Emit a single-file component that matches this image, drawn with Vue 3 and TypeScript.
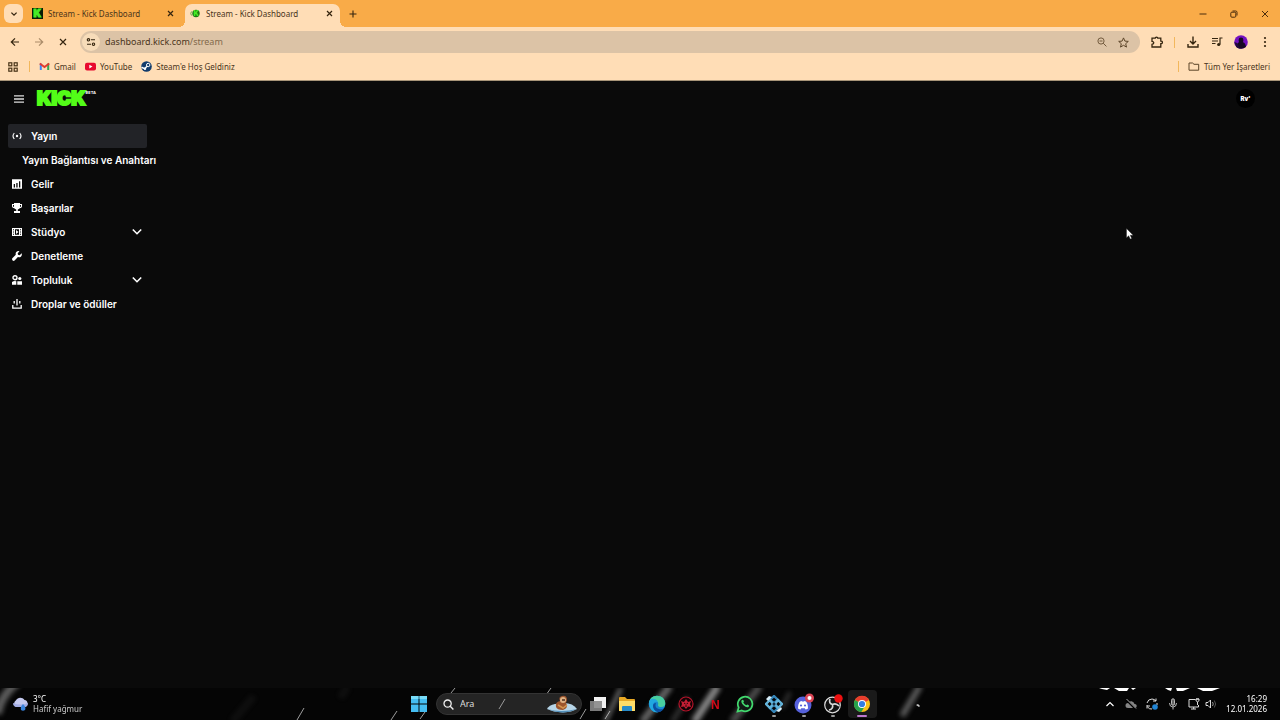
<script setup lang="ts">
import { ref } from 'vue'

interface NavItem {
  label: string
  icon: string
  active?: boolean
  child?: boolean
  expandable?: boolean
}

const search = ref('')
const address = ref('dashboard.kick.com/stream')

const nav: NavItem[] = [
  { label: 'Yayın', icon: 'live', active: true },
  { label: 'Yayın Bağlantısı ve Anahtarı', icon: '', child: true },
  { label: 'Gelir', icon: 'chart' },
  { label: 'Başarılar', icon: 'trophy' },
  { label: 'Stüdyo', icon: 'studio', expandable: true },
  { label: 'Denetleme', icon: 'wrench' },
  { label: 'Topluluk', icon: 'people', expandable: true },
  { label: 'Droplar ve ödüller', icon: 'drops' },
]
</script>

<template>
  <div class="screen">
    <header class="browser">
      <div class="tabstrip">
        <button class="tab-search" aria-label="Sekmelerde ara">
          <svg width="8" height="8" viewBox="0 0 8 8"><path d="M1.400 2.600 4 5.200l2.600-2.600" fill="none" stroke="#35250f" stroke-width="1.300" /></svg>
        </button>
        <div class="tab">
          <svg class="favicon" width="11" height="11" viewBox="0 0 11 11">
            <rect width="11" height="11" fill="#071d05" />
            <text x="1.4" y="9.2" class="k-mark" font-size="10">K</text>
          </svg>
          <span class="tab-title">Stream - Kick Dashboard</span>
          <button class="close" aria-label="Sekmeyi kapat">
            <svg width="7" height="7" viewBox="0 0 7 7"><path d="m1 1 5 5M6 1 1 6" stroke="#35250f" stroke-width="1.2" /></svg>
          </button>
        </div>
        <div class="tab active">
          <svg class="favicon" width="11" height="11" viewBox="0 0 11 11">
            <circle cx="6" cy="5.5" r="3.700" fill="#1c7a12" />
            <path d="M1.5 3.5Q0 5.5 1.5 7.5" stroke="#6aa648" fill="none" />
            <text x="3.400" y="8" class="k-mark small" font-size="7">K</text>
          </svg>
          <span class="tab-title">Stream - Kick Dashboard</span>
          <button class="close" aria-label="Sekmeyi kapat">
            <svg width="7" height="7" viewBox="0 0 7 7"><path d="m1 1 5 5M6 1 1 6" stroke="#35250f" stroke-width="1.2" /></svg>
          </button>
        </div>
        <button class="new-tab" aria-label="Yeni sekme">
          <svg width="8" height="8" viewBox="0 0 8 8"><path d="M4 .5v7M.5 4h7" stroke="#35250f" stroke-width="1.1" /></svg>
        </button>
        <div class="window-controls">
          <button aria-label="Küçült"><svg width="8" height="8" viewBox="0 0 8 8"><path d="M.5 4h7" stroke="#4a2c0c" /></svg></button>
          <button aria-label="Geri yükle">
            <svg width="8" height="8" viewBox="0 0 8 8" fill="none" stroke="#4a2c0c"><rect x=".8" y="2.2" width="5" height="5" rx="1" /><path d="M2.5 1h3.2Q7 1 7 2.3v3.2" /></svg>
          </button>
          <button aria-label="Kapat"><svg width="8" height="8" viewBox="0 0 8 8"><path d="m1 1 6 6M7 1 1 7" stroke="#4a2c0c" /></svg></button>
        </div>
      </div>

      <div class="toolbar">
        <button class="tool" aria-label="Geri">
          <svg width="10" height="10" viewBox="0 0 10 10"><path d="M9 5H1.5M5 1.3 1.3 5 5 8.7" fill="none" stroke="#35250f" stroke-width="1.2" /></svg>
        </button>
        <button class="tool" aria-label="İleri">
          <svg width="10" height="10" viewBox="0 0 10 10"><path d="M1 5h7.5M5 1.3 8.7 5 5 8.7" fill="none" stroke="#ab8c69" stroke-width="1.2" /></svg>
        </button>
        <button class="tool" aria-label="Yüklemeyi durdur">
          <svg width="10" height="10" viewBox="0 0 10 10"><path d="m2 2 6 6M8 2 2 8" stroke="#35250f" stroke-width="1.2" /></svg>
        </button>
        <div class="omnibox">
          <button class="site-info" aria-label="Site bilgileri">
            <svg width="10" height="10" viewBox="0 0 10 10" fill="none" stroke="#35250f" stroke-width="1.1"><circle cx="2.5" cy="2.8" r="1.2" /><path d="M5 2.8h4M1 7.2h4" /><circle cx="7.5" cy="7.2" r="1.2" /></svg>
          </button>
          <label class="url">
            <span aria-hidden="true">dashboard.kick.com<i>/stream</i></span>
            <input v-model="address" type="text" aria-label="Adres çubuğu" />
          </label>
          <button class="omni-btn" aria-label="Yakınlaştırma">
            <svg width="10" height="10" viewBox="0 0 10 10" fill="none" stroke="#725a3d"><circle cx="4" cy="4" r="3.1" /><path d="m6.2 6.2 3.2 3.2M2.5 4h3" /></svg>
          </button>
          <button class="omni-btn" aria-label="Yer işareti ekle">
            <svg width="11" height="11" viewBox="0 0 11 11"><path d="m5.5.9 1.4 3.2 3.4.3-2.6 2.3.8 3.4-3-1.8-3 1.8.8-3.4L.7 4.4l3.4-.3z" fill="none" stroke="#5c4529" /></svg>
          </button>
        </div>
        <div class="toolbar-actions">
          <button aria-label="Uzantılar">
            <svg width="12" height="12" viewBox="0 0 12 12"><path d="M1 2.200h3.200a1.300 1 0 0 1 2.600 0h3v3h.4a1.2 1.2 0 0 1 0 2.4h-.4V11H1V8.3q1.800-.2 1.800-1.500T1 5.300z" fill="none" stroke="#35250f" stroke-width="1.300" /></svg>
          </button>
          <span class="divider"></span>
          <button aria-label="İndirilenler">
            <svg width="12" height="12" viewBox="0 0 12 12"><path d="M6 .5V8M3 5l3 3 3-3M1 8v3h10V8" fill="none" stroke="#35250f" stroke-width="1.4" /></svg>
          </button>
          <button aria-label="Medya denetimi">
            <svg width="12" height="12" viewBox="0 0 12 12"><path d="M1 2.5h6M1 5h6M1 7.5h3.5M9 8.5V2h2.5" fill="none" stroke="#35250f" stroke-width="1.2" /><circle cx="7.7" cy="8.5" r="1.6" fill="#35250f" /></svg>
          </button>
          <button aria-label="Profil">
            <svg width="14" height="14" viewBox="0 0 14 14"><circle cx="7" cy="7" r="6.8" fill="#7410c0" /><path d="M2 12Q3 8 5 7.3 3.7 2.5 7 2.5T9 7.3Q11.5 8 12 12 7 15.5 2 12z" fill="#160824" /><path d="M.4 7Q1 12 6 13.7L3 8z" fill="#240a3d" /></svg>
          </button>
          <button aria-label="Menü">
            <svg width="12" height="12" viewBox="0 0 12 12" fill="#35250f"><circle cx="6" cy="2" r="1.1" /><circle cx="6" cy="6" r="1.1" /><circle cx="6" cy="10" r="1.1" /></svg>
          </button>
        </div>
      </div>

      <nav class="bookmarks" aria-label="Yer işaretleri">
        <button class="apps" aria-label="Uygulamalar">
          <svg width="10" height="10" viewBox="0 0 10 10" fill="none" stroke="#4a3518" stroke-width="1.2"><rect x=".8" y=".8" width="3" height="3" /><rect x="6.2" y=".8" width="3" height="3" /><rect x=".8" y="6.2" width="3" height="3" /><rect x="6.2" y="6.2" width="3" height="3" /></svg>
        </button>
        <span class="divider"></span>
        <a href="#gmail">
          <svg width="11" height="11" viewBox="0 0 11 11"><path d="M.8 2.5h2V9h-2z" fill="#4285f4" /><path d="M8.2 2.5h2V9h-2z" fill="#34a853" /><path d="M.8 2.5 5.5 6l4.7-3.5" fill="none" stroke="#e13b2e" stroke-width="1.9" /></svg>
          Gmail
        </a>
        <a href="#youtube">
          <svg width="11" height="11" viewBox="0 0 11 11"><rect y="1.7" width="11" height="7.8" rx="2" fill="#e8092f" /><path d="m4.3 3.7 3.2 1.9-3.2 1.9z" fill="#fff" /></svg>
          YouTube
        </a>
        <a href="#steam">
          <svg width="11" height="11" viewBox="0 0 11 11"><circle cx="5.5" cy="5.5" r="5.3" fill="#123b6c" /><path d="m.5 6.3 3.2 1.4 3.5-3.6" stroke="#fff" stroke-width="1.5" fill="none" /><circle cx="7.2" cy="4" r="1.7" fill="#123b6c" stroke="#fff" /><circle cx="4" cy="7.8" r="1.2" fill="#fff" /></svg>
          Steam'e Hoş Geldiniz
        </a>
        <div class="all-bookmarks">
          <span class="divider"></span>
          <a href="#all">
            <svg width="12" height="11" viewBox="0 0 12 11"><path d="M1 2h3.5L6 3.3h4.7v5.9H1z" fill="none" stroke="#5c4529" /></svg>
            Tüm Yer İşaretleri
          </a>
        </div>
      </nav>
    </header>

    <main class="page">
      <header class="page-header">
        <button class="menu" aria-label="Menüyü aç">
          <svg width="10" height="8" viewBox="0 0 10 8"><path d="M0 .8h10M0 4h10M0 7.2h10" stroke="#dedede" stroke-width="1.3" /></svg>
        </button>
        <a class="brand" href="#home"><b>KICK</b><sup>BETA</sup></a>
        <button class="avatar" aria-label="Hesap">Rv<span>'</span></button>
      </header>
      <nav class="sidebar" aria-label="Kenar menüsü">
        <a v-for="item in nav" :key="item.label" href="#stream" class="nav-item" :class="{ selected: item.active, child: item.child }">
          <svg v-if="item.icon" class="nav-icon" width="10" height="10" viewBox="0 0 10 10">
            <g v-if="item.icon === 'live'"><circle cx="5" cy="5" r="1.2" fill="#fff" /><path d="M2.3 2Q-.3 5 2.3 8M7.7 2q2.6 3 0 6" fill="none" stroke="#fff" stroke-width="1.1" /></g>
            <path v-else-if="item.icon === 'chart'" fill="#fff" fill-rule="evenodd" d="M0 .3h10v9.4H0zM1.7 5v3.5H3V5zM4.3 4v4.5h1.3V4zM7 2.3v6.2h1.3V2.3z" />
            <path v-else-if="item.icon === 'trophy'" fill="#fff" fill-rule="evenodd" d="M2 0h6v1h2v2.5Q9.8 5 7.7 5.2 7 6.2 5.8 6.4V8H8v2H2V8h2.2V6.4Q3 6.2 2.3 5.2.2 5 0 3.500V1h2zM1 2v1.500l1 .6V2zM8 2v2.100l1-.6V2z" />
            <path v-else-if="item.icon === 'studio'" fill="#fff" fill-rule="evenodd" d="M0 1h10v8H0zM1 2.200v1h1v-1zM1 4.500v1h1v-1zM1 6.800v1h1v-1zM8 2.200v1h1v-1zM8 4.500v1h1v-1zM8 6.800v1h1v-1zM3 2.200v5.600h4V2.200zM4 3l2.500 2L4 7z" />
            <path v-else-if="item.icon === 'wrench'" fill="#fff" d="M9.600 2.300 7.700 4.200 6 3.800 5.700 2.200 7.500.3Q5.700-.3 4.300 1.100 3.300 2.300 3.800 3.800L.3 7.300Q-.3 8.500.6 9.400q1 .9 2 .1l3.300-3.400q1.900.5 3.200-.7Q10.300 4 9.600 2.300z" />
            <g v-else-if="item.icon === 'people'"><circle cx="3" cy="2.700" r="2" fill="none" stroke="#fff" stroke-width="1.400" /><circle cx="7.800" cy="3.500" r="1.600" fill="#fff" /><path d="M0 9.700V7q2-1.500 4.300-.8v3.500zM5.300 9.700V6.200H10v3.500z" fill="#fff" /></g>
            <path v-else fill="none" stroke="#fff" stroke-width="1.300" d="M.8 6v3.200h8.400V6M5 0v6.500M2.200 2v2.500M7.800 2v2.500" />
          </svg>
          <span>{{ item.label }}</span>
          <svg v-if="item.expandable" class="chevron" width="10" height="10" viewBox="0 0 10 10"><path d="m.8 2.500 4.200 4.200L9.200 2.500" fill="none" stroke="#fff" stroke-width="1.600" /></svg>
        </a>
      </nav>
      <svg class="cursor" width="8" height="12" viewBox="0 0 8 12"><path d="M.5.5v9.300l2.200-2 1.500 3.300 1.500-.7-1.500-3.200h3z" fill="#fff" stroke="#222" stroke-width=".4" /></svg>
    </main>

    <footer class="taskbar">
      <svg class="wallpaper" viewBox="0 0 1280 32" preserveAspectRatio="none" aria-hidden="true">
        <defs>
          <filter id="soft" x="-100%" y="-30%" width="300%" height="160%"><feGaussianBlur stdDeviation="2.500" /></filter>
        </defs>
        <g filter="url(#soft)" stroke="#b5b5b5" fill="none">
          <path d="M-2 26Q0 8 18-6" stroke-width="8" opacity=".5" />
          <path d="m605 34 16-34" stroke-width="4" opacity=".6" />
          <path d="m642 34 28-36" stroke-width="7" opacity=".55" />
          <path d="m672 34 16-25" stroke-width="5" opacity=".25" />
          <path d="m694 34 24-36" stroke-width="7" opacity=".75" />
          <path d="m732 34 28-36" stroke-width="7" opacity=".4" />
          <path d="m782 20 8-16" stroke-width="4" opacity=".25" />
          <path d="m902 28 18-30" stroke-width="6" opacity=".5" />
          <path d="m232 34 22-26M340 10l8-12" stroke-width="8" opacity=".06" />
        </g>
        <g stroke="#ddd" stroke-width="1" opacity=".7">
          <path d="m297 32 7-12M420 31l5-7M546 7l5-7M580 31l6-10M605 31l5-8M391 32l6-9M451 5l4-5" />
        </g>
        <path d="M1099 0h11l-3 2-5-1zM1114 0h15l-2 3h-8zM1131 0h5l-3 2zM1165 0h7l-1 3-3-1zM1176 0h14l-7 3-6 0zM1197 0h23l-8 3h-9z" fill="#fff" />
        <path d="m916 17 2-1 2 2-1 1z" fill="#ccc" />
      </svg>
      <button class="weather">
        <svg width="17" height="16" viewBox="0 0 17 16"><path d="M4 11A4 4 0 0 1 4 4.200 5 5 0 0 1 12.500 4 3.600 3.600 0 0 1 13 11z" fill="#c5caf0" /><path d="M4 11A4 4 0 0 1 1 7q7 3 15 0 0 3.500-3 4z" fill="#a4aee5" /><path d="M11 8q3.500 3.500 2 6-2 1.500-4 0Q8 11 11 8z" fill="#3883dc" /></svg>
        <span>3°C<br><em>Hafif yağmur</em></span>
      </button>

      <div class="dock">
        <button class="start" aria-label="Başlat">
          <svg width="16" height="16" viewBox="0 0 16 16" fill="#45bdf1"><path d="M0 0h7.500v7.500H0zM8.500 0H16v7.500H8.500zM0 8.500h7.500V16H0zM8.500 8.500H16V16H8.500z" /><path d="M0 0h7.500v3H0zM8.500 0H16v3H8.500z" fill="#78dcf8" /></svg>
        </button>
        <label class="search">
          <svg width="11" height="11" viewBox="0 0 11 11"><circle cx="4.600" cy="4.600" r="3.600" fill="none" stroke="#eee" stroke-width="1.300" /><path d="m7.200 7.200 3.200 3.200" stroke="#eee" stroke-width="1.400" /></svg>
          <input v-model="search" type="text" placeholder="Ara" aria-label="Ara" />
          <svg class="streak" width="8" height="14" viewBox="0 0 8 14"><path d="m1 12 6-10" stroke="#999" /></svg>
          <svg width="32" height="18" viewBox="0 0 32 18"><path d="M1 14q2-4 8-5l9-1q9 0 13 6-5 3-14 3.500Q7 17 1 14z" fill="#b7d5e7" /><path d="M1 14q14 4 30 0-8 3.500-14 3.500T1 14z" fill="#528fba" /><path d="M10 12Q9 7 14 6q-2-4 2-5 5-1 5 4l-1 3q3 5-3 7-6 0-7-3z" fill="#9c552d" /><circle cx="17" cy="5" r="3" fill="#ddb184" /><path d="M16 5h3" stroke="#35180b" stroke-width="1.300" /><path d="m12 10 5 3 4-3" stroke="#d39550" stroke-width="1.500" fill="none" /></svg>
        </label>
        <div class="pinned">
          <button aria-label="Görev görünümü"><svg width="18" height="18" viewBox="0 0 18 18"><rect x="5" y="2" width="12" height="11" fill="#f1f1f1" /><rect x="1" y="6" width="12" height="10" fill="#888" opacity=".9" /></svg></button>
          <button aria-label="Dosya Gezgini"><svg width="18" height="18" viewBox="0 0 18 18"><path d="M1 3q0-1 1-1h5l2 2h7q1 0 1 1v11H1z" fill="#e9a925" /><path d="M1 6h16v10H1z" fill="#ffdd68" /><path d="M4 16v-4q0-1 1-1h8q1 0 1 1v4z" fill="#278bc8" /></svg></button>
          <button aria-label="Edge"><svg width="18" height="18" viewBox="0 0 18 18"><circle cx="9" cy="9" r="8.300" fill="#1689d2" /><path d="M1 8Q2 .7 9 .7q7 0 8.300 7 .2 4.300-4.300 4.300-3 0-3-2 1-3-2-4-4-1-7 2z" fill="#48cfa0" /><path d="M1 8q0-2 2-4 5-1 7 3-4-1-5 3 0 5 5 7.500Q2 18 1 8z" fill="#20a8e0" /><path d="M8 8q-2 5 3 6 3 1 5-1-2 4-6 4.300-5-2-5-6.300 0-3 3-3z" fill="#0b4fa0" /></svg></button>
          <button aria-label="Oyun"><svg width="18" height="18" viewBox="0 0 18 18"><circle cx="9" cy="9" r="7" fill="#120305" stroke="#b5142a" stroke-width="1.200" /><path d="m4 6 3 1 2-3 2 3 3-1-1 3 1 3-3-.5L9 14l-2-2.500-3 .5 1-3z" fill="#c41e34" /><path d="m7 8 1.500 1M11 8 9.500 9M9 10v2" stroke="#240609" /></svg></button>
          <button aria-label="Netflix"><svg width="18" height="18" viewBox="0 0 18 18"><text x="5" y="14" font-size="12" class="netflix">N</text></svg></button>
          <button aria-label="WhatsApp"><svg width="18" height="18" viewBox="0 0 18 18"><path d="m1.500 16.500 1.200-4A7.300 7.300 0 1 1 5.800 15.500z" fill="#101914" stroke="#42d96e" stroke-width="1.700" /><path d="M5.500 5.500q1.500-2 2.500.7l-.7 1.300q1.200 2 3 2.800l1-.8q2.700.7 1.200 2.500-2 1.200-5-1.700-2.800-2.800-2-4.800z" fill="#42d96e" /></svg></button>
          <button class="running" aria-label="Uygulama"><svg width="18" height="18" viewBox="0 0 18 18"><g fill="none" stroke-width="2.400"><path d="m5 5 4-4 4 4-4 3zM5 13l4 4 4-4-4-3z" stroke="#3585b8" /><path d="m5 5-4 4 4 4 3-4zM13 5l4 4-4 4-3-4z" stroke="#63b4db" /></g><path d="m1 4 3-3 3 1-4 4zM11 16l5-4 1 2-3 3z" fill="#d7edf8" /><circle cx="9" cy="9" r="1.500" fill="#152e42" /></svg></button>
          <button class="running" aria-label="Discord"><svg width="22" height="22" viewBox="0 0 22 22"><circle cx="10" cy="12" r="8.500" fill="#5661dc" /><path d="M5 15.500q0-5 2-7l2-.5 1 1 1-1 2 .5q2 2 2 7-1.500 1-2.500 1l-.7-1.300H8.200L7.500 16.500q-1 0-2.500-1z" fill="#fff" /><circle cx="8" cy="12.500" r="1.100" fill="#5661dc" /><circle cx="12" cy="12.500" r="1.100" fill="#5661dc" /><circle cx="16.500" cy="5" r="4.500" fill="#d94353" /><circle cx="16.500" cy="5" r="2" fill="#fff" /></svg></button>
          <button class="running" aria-label="OBS"><svg width="22" height="22" viewBox="0 0 22 22"><circle cx="10.500" cy="12" r="7.800" fill="#111" stroke="#ddd" stroke-width="1.200" /><g fill="none" stroke="#d5d5d5" stroke-width="1.700"><path d="M8 6q-1.500 4.500 2.500 5.500M17 13q-3-3.500-6.500-1.500M7 17q4.500-1 3.500-5.500" /></g><circle cx="16.500" cy="5.500" r="4.200" fill="#ed1010" /></svg></button>
          <button class="running current" aria-label="Chrome"><svg width="18" height="18" viewBox="0 0 18 18"><circle cx="9" cy="9" r="8" fill="#fbc116" /><path d="M9 9 2 5a8 8 0 0 1 14 0z" fill="#e83d2d" /><path d="M9 9 2 5a8 8 0 0 0 6.300 12L12 11z" fill="#27a24c" /><circle cx="9" cy="9" r="4" fill="#fff" /><circle cx="9" cy="9" r="3.100" fill="#347de2" /></svg></button>
        </div>
      </div>

      <div class="tray">
        <button aria-label="Gizli simgeler"><svg width="12" height="12" viewBox="0 0 12 12"><path d="m2.500 8 3.500-3.500L9.500 8" stroke="#fff" stroke-width="1.200" fill="none" /></svg></button>
        <button aria-label="OneDrive"><svg width="12" height="12" viewBox="0 0 12 12"><path d="M3 10a2.500 2.500 0 0 1 0-5 3.500 3.500 0 0 1 6.500 1A2 2 0 0 1 10 10z" fill="#858585" /><path d="m1 1.500 9.500 9.500" stroke="#000" stroke-width="2" /><path d="m1.500 1 9.500 9.500" stroke="#aaa" /></svg></button>
        <button aria-label="Eşitleme"><svg width="12" height="12" viewBox="0 0 12 12"><path d="M1 5q1-4 5-4 2 0 4 2V.5M10 3H7M11 5v2M1 7V10.500M1 8h3M1.500 9q2 2.500 4.500 2" stroke="#ddd" fill="none" /><circle cx="9" cy="9" r="2.800" fill="#2185d5" /></svg></button>
        <button aria-label="Mikrofon"><svg width="12" height="12" viewBox="0 0 12 12" fill="none" stroke="#bbb"><rect x="4.500" y=".8" width="3" height="6.500" rx="1.500" fill="#666" /><path d="M2.500 5Q2.500 9 6 9t3.500-4M6 9v2.500" /></svg></button>
        <button aria-label="Ağ"><svg width="12" height="12" viewBox="0 0 12 12" fill="none" stroke="#ddd"><path d="M7.500 1.500H1v7.500h9.500V7M3 11h5M5.700 9v2M9.500 7V4M8 1v1.800q1.500 2 3 0V1zM8 1h3" /></svg></button>
        <button aria-label="Ses"><svg width="12" height="12" viewBox="0 0 12 12" fill="none"><path d="M1 4.500h2L5.500 2v8L3 7.500H1z" stroke="#ddd" /><path d="M7.500 4q1.500 2 0 4" stroke="#999" /><path d="M9.300 2.500q2.700 3.500 0 7" stroke="#555" /></svg></button>
        <time datetime="2026-01-12T16:29">16:29<br>12.01.2026</time>
      </div>
    </footer>
  </div>
</template>

<style>
body { margin: 0; background: #0a0a0a; }
</style>

<style scoped>
* { box-sizing: border-box; }
.screen { min-height: 100vh; display: flex; flex-direction: column; background: #0a0a0a; font-family: "Noto Sans", "Open Sans", sans-serif; }
button { display: flex; align-items: center; justify-content: center; flex: none; margin: 0; padding: 0; border: 0; background: none; color: inherit; font: inherit; }
svg { display: block; flex: none; }
a { color: inherit; text-decoration: none; }
input { min-width: 0; padding: 0; border: 0; outline: 0; background: none; color: inherit; font: inherit; }

.browser { background: #ffddb6; color: #49341b; font-size: 8px; border-bottom: 1px solid #a79478; }
.tabstrip { height: 27px; display: flex; align-items: flex-end; background: #f9ab48; padding-left: 4px; }
.tab-search { width: 19px; height: 19px; margin-bottom: 4px; border-radius: 6px; background: #ffddb6; }
.tab { width: 156px; height: 23px; margin-left: 4px; padding: 0 8px 4px 5px; display: flex; align-items: center; gap: 5px; }
.tab.active { position: relative; width: 155px; margin-left: 2px; padding-right: 6px; border-radius: 7px 7px 0 0; background: #ffddb6; }
.tab.active::before, .tab.active::after { content: ""; position: absolute; bottom: 0; width: 6px; height: 6px; }
.tab.active::before { right: 100%; background: radial-gradient(circle at 0 0, transparent 6px, #ffddb6 6px); }
.tab.active::after { left: 100%; background: radial-gradient(circle at 100% 0, transparent 6px, #ffddb6 6px); }
.tab-title { flex: 1; white-space: nowrap; }
.close { width: 10px; height: 14px; }
.k-mark { fill: #49ec27; font-family: Inter, sans-serif; font-weight: 900; stroke: #49ec27; stroke-width: 1px; }
.k-mark.small { stroke: none; }
.new-tab { width: 16px; height: 16px; margin: 0 0 5px 5px; }
.window-controls { display: flex; margin-left: auto; height: 27px; }
.window-controls button { width: 31px; }

.toolbar { height: 30px; display: flex; align-items: center; padding: 0 3px; }
.tool { width: 24px; height: 22px; }
.omnibox { flex: 1; height: 22px; margin: 0 5px; padding: 0 10px 0 2px; display: flex; align-items: center; border-radius: 11px; background: #dcc3a6; }
.site-info { width: 18px; height: 18px; border-radius: 50%; background: #f7dcb9; }
.url { flex: 1; display: grid; align-items: center; margin-left: 5px; font-size: 9px; line-height: 12px; }
.url span, .url input { grid-area: 1 / 1; }
.url input { color: transparent; caret-color: #49341b; }
.url i { font-style: normal; color: #82694b; }
.omni-btn { width: 22px; height: 20px; }
.omni-btn + .omni-btn { width: 14px; margin-left: 3px; }
.toolbar-actions { display: flex; align-items: center; }
.toolbar-actions button { width: 24px; height: 24px; }
.toolbar-actions .divider { margin: 0 6px 0 5px; }
.divider { width: 1px; height: 11px; background: #f2b75c; }

.bookmarks { height: 23px; padding: 0 10px 4px 8px; display: flex; align-items: center; }
.bookmarks .apps { margin-right: 11px; }
.bookmarks a { display: flex; align-items: center; gap: 4px; margin-left: 9px; white-space: nowrap; }
.all-bookmarks { margin-left: auto; display: flex; align-items: center; }

.page { position: relative; flex: 1; font-family: Inter, sans-serif; color: #fff; }
.page-header { height: 35px; display: flex; align-items: center; padding: 0 25px 0 14px; }
.brand { display: flex; align-items: flex-start; margin-left: 13px; color: #53fc18; }
.brand b { font-size: 19px; line-height: 20px; font-weight: 900; -webkit-text-stroke: 2px #53fc18; }
.brand sup { font-size: 4px; line-height: 8px; font-weight: 700; color: #fff; }
.avatar { width: 19px; height: 19px; margin-left: auto; border-radius: 50%; background: #000; font-size: 6px; font-weight: 900; }
.sidebar { width: 147px; padding: 8px 0 0 8px; font-size: 10px; line-height: 24px; font-weight: 600; }
.nav-item { height: 24px; display: flex; align-items: center; gap: 9px; padding: 0 5px 0 4px; border-radius: 2px; white-space: nowrap; }
.nav-item.selected { background: #222327; }
.nav-item.child { padding-left: 14px; }
.chevron { margin-left: auto; }
.cursor { position: absolute; left: 88%; top: 147px; }

.taskbar { position: relative; height: 32px; display: grid; grid-template-columns: 1fr auto 1fr; align-items: center; background: #050505; color: #fff; font-size: 8px; line-height: 10px; overflow: hidden; }
.wallpaper { position: absolute; inset: 0; width: 100%; height: 100%; }
.weather, .dock, .tray { position: relative; }
.weather { justify-self: start; gap: 4px; margin-left: 12px; text-align: left; }
.weather em { font-style: normal; color: #ccc; }
.dock { display: flex; align-items: center; height: 32px; padding-left: 2px; }
.start { width: 28px; height: 32px; }
.search { width: 146px; height: 22px; margin: 0 1px 0 3px; padding: 0 3px 0 6px; display: flex; align-items: center; gap: 6px; border: 1px solid #333; border-radius: 11px; background: #242424; font-size: 9px; }
.search input { flex: 1; }
.search input::placeholder { color: #ddd; opacity: 1; }
.streak { margin-right: 34px; }
.pinned { display: flex; width: 294px; height: 28px; }
.pinned button { flex: 1; position: relative; }
.netflix { font-family: "Liberation Sans", sans-serif; font-weight: 700; fill: #d50a18; }
.running::after { content: ""; position: absolute; bottom: 1px; width: 4px; height: 2px; border-radius: 1px; background: #999; }
.current { border-radius: 4px; background: #1a1a1a; }
.current::after { width: 10px; background: #bd79cf; }
.tray { justify-self: end; display: flex; align-items: center; gap: 9px; padding-right: 13px; }
.tray button:nth-of-type(6) { margin-left: -4px; }
.tray time { text-align: right; }
</style>
